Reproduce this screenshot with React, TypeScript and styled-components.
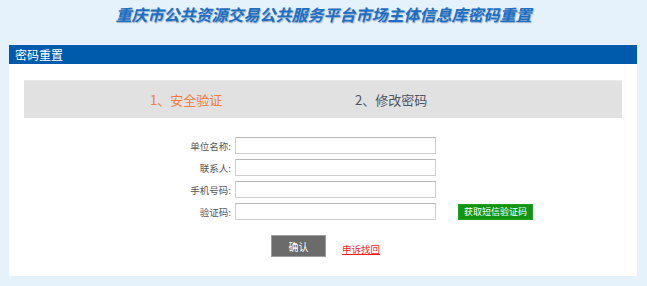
import React from 'react';
import styled, { createGlobalStyle } from 'styled-components';

const GlobalStyle = createGlobalStyle`
  html, body {
    margin: 0;
    padding: 0;
    background: #e6f2fb;
    font-family: "Noto Sans CJK SC", "Noto Sans", sans-serif;
  }
`;

const Page = styled.div`
  width: 647px;
  min-height: 286px;
  background: #e6f2fb;
`;

const Title = styled.h1`
  margin: 0;
  height: 45px;
  padding-top: 5px;
  box-sizing: border-box;
  text-align: center;
  font-size: 16px;
  line-height: 18px;
  font-weight: bold;
  font-style: italic;
  color: #1c6fc2;
  text-shadow: 1px 1px 1px rgba(10, 50, 110, 0.35);
`;

const Panel = styled.div`
  margin: 0 10px 0 9px;
  background: #fff;
`;

const PanelHeader = styled.div`
  height: 19px;
  line-height: 19px;
  padding-left: 6px;
  background: #005bac;
  color: #fff;
  font-size: 12px;
`;

const PanelBody = styled.div`
  padding: 16px 15px 19px;
`;

const Steps = styled.div`
  display: flex;
  align-items: center;
  height: 38px;
  padding-left: 126px;
  background: #e1e1e1;
  border-top: 1px solid #ebebeb;
  box-sizing: border-box;
`;

const Step = styled.div<{ $active?: boolean }>`
  width: 205px;
  font-size: 13px;
  color: ${(p) => (p.$active ? '#f27d40' : '#4d5462')};
`;

const Form = styled.div`
  display: grid;
  grid-template-columns: 207px 201px auto;
  grid-auto-rows: 17px;
  column-gap: 4px;
  row-gap: 5px;
  margin-top: 19px;
  align-items: center;
`;

const Label = styled.label`
  text-align: right;
  font-size: 9.5px;
  color: #555;
`;

const Input = styled.input`
  box-sizing: border-box;
  width: 201px;
  height: 17px;
  margin: 0;
  padding: 0 3px;
  border: 1px solid #cfcfcf;
  border-top-color: #b8b8b8;
  background: #fff;
  outline: none;
`;

const Extra = styled.div`
  display: flex;
  align-items: center;
  height: 17px;
`;

const SmsButton = styled.button`
  margin-left: 18px;
  width: 75px;
  height: 16px;
  padding: 0;
  border: 1px solid #21a321;
  background: #129512;
  color: #fff;
  font-family: inherit;
  font-size: 9px;
  line-height: 14px;
`;

const Actions = styled.div`
  display: flex;
  align-items: center;
  margin-top: 15px;
  padding-left: 247px;
`;

const SubmitButton = styled.button`
  width: 55px;
  height: 22px;
  padding: 0;
  border: 1px solid #9c9c9c;
  background: #6b6b6b;
  color: #fff;
  font-family: inherit;
  font-size: 10px;
`;

const AppealLink = styled.a`
  margin-left: 16px;
  margin-top: 6px;
  font-size: 9.5px;
  color: #ff1a1a;
  text-decoration: underline;
`;

const fields = ['单位名称:', '联系人:', '手机号码:', '验证码:'];

const App = () => (
  <Page>
    <GlobalStyle />
    <Title>重庆市公共资源交易公共服务平台市场主体信息库密码重置</Title>
    <Panel>
      <PanelHeader>密码重置</PanelHeader>
      <PanelBody>
        <Steps>
          <Step $active>1、安全验证</Step>
          <Step>2、修改密码</Step>
        </Steps>
        <Form>
          {fields.map((f, i) => (
            <React.Fragment key={f}>
              <Label>{f}</Label>
              <Input type="text" />
              <Extra>{i === fields.length - 1 && <SmsButton>获取短信验证码</SmsButton>}</Extra>
            </React.Fragment>
          ))}
        </Form>
        <Actions>
          <SubmitButton>确认</SubmitButton>
          <AppealLink href="#">申诉找回</AppealLink>
        </Actions>
      </PanelBody>
    </Panel>
  </Page>
);

export default App;
